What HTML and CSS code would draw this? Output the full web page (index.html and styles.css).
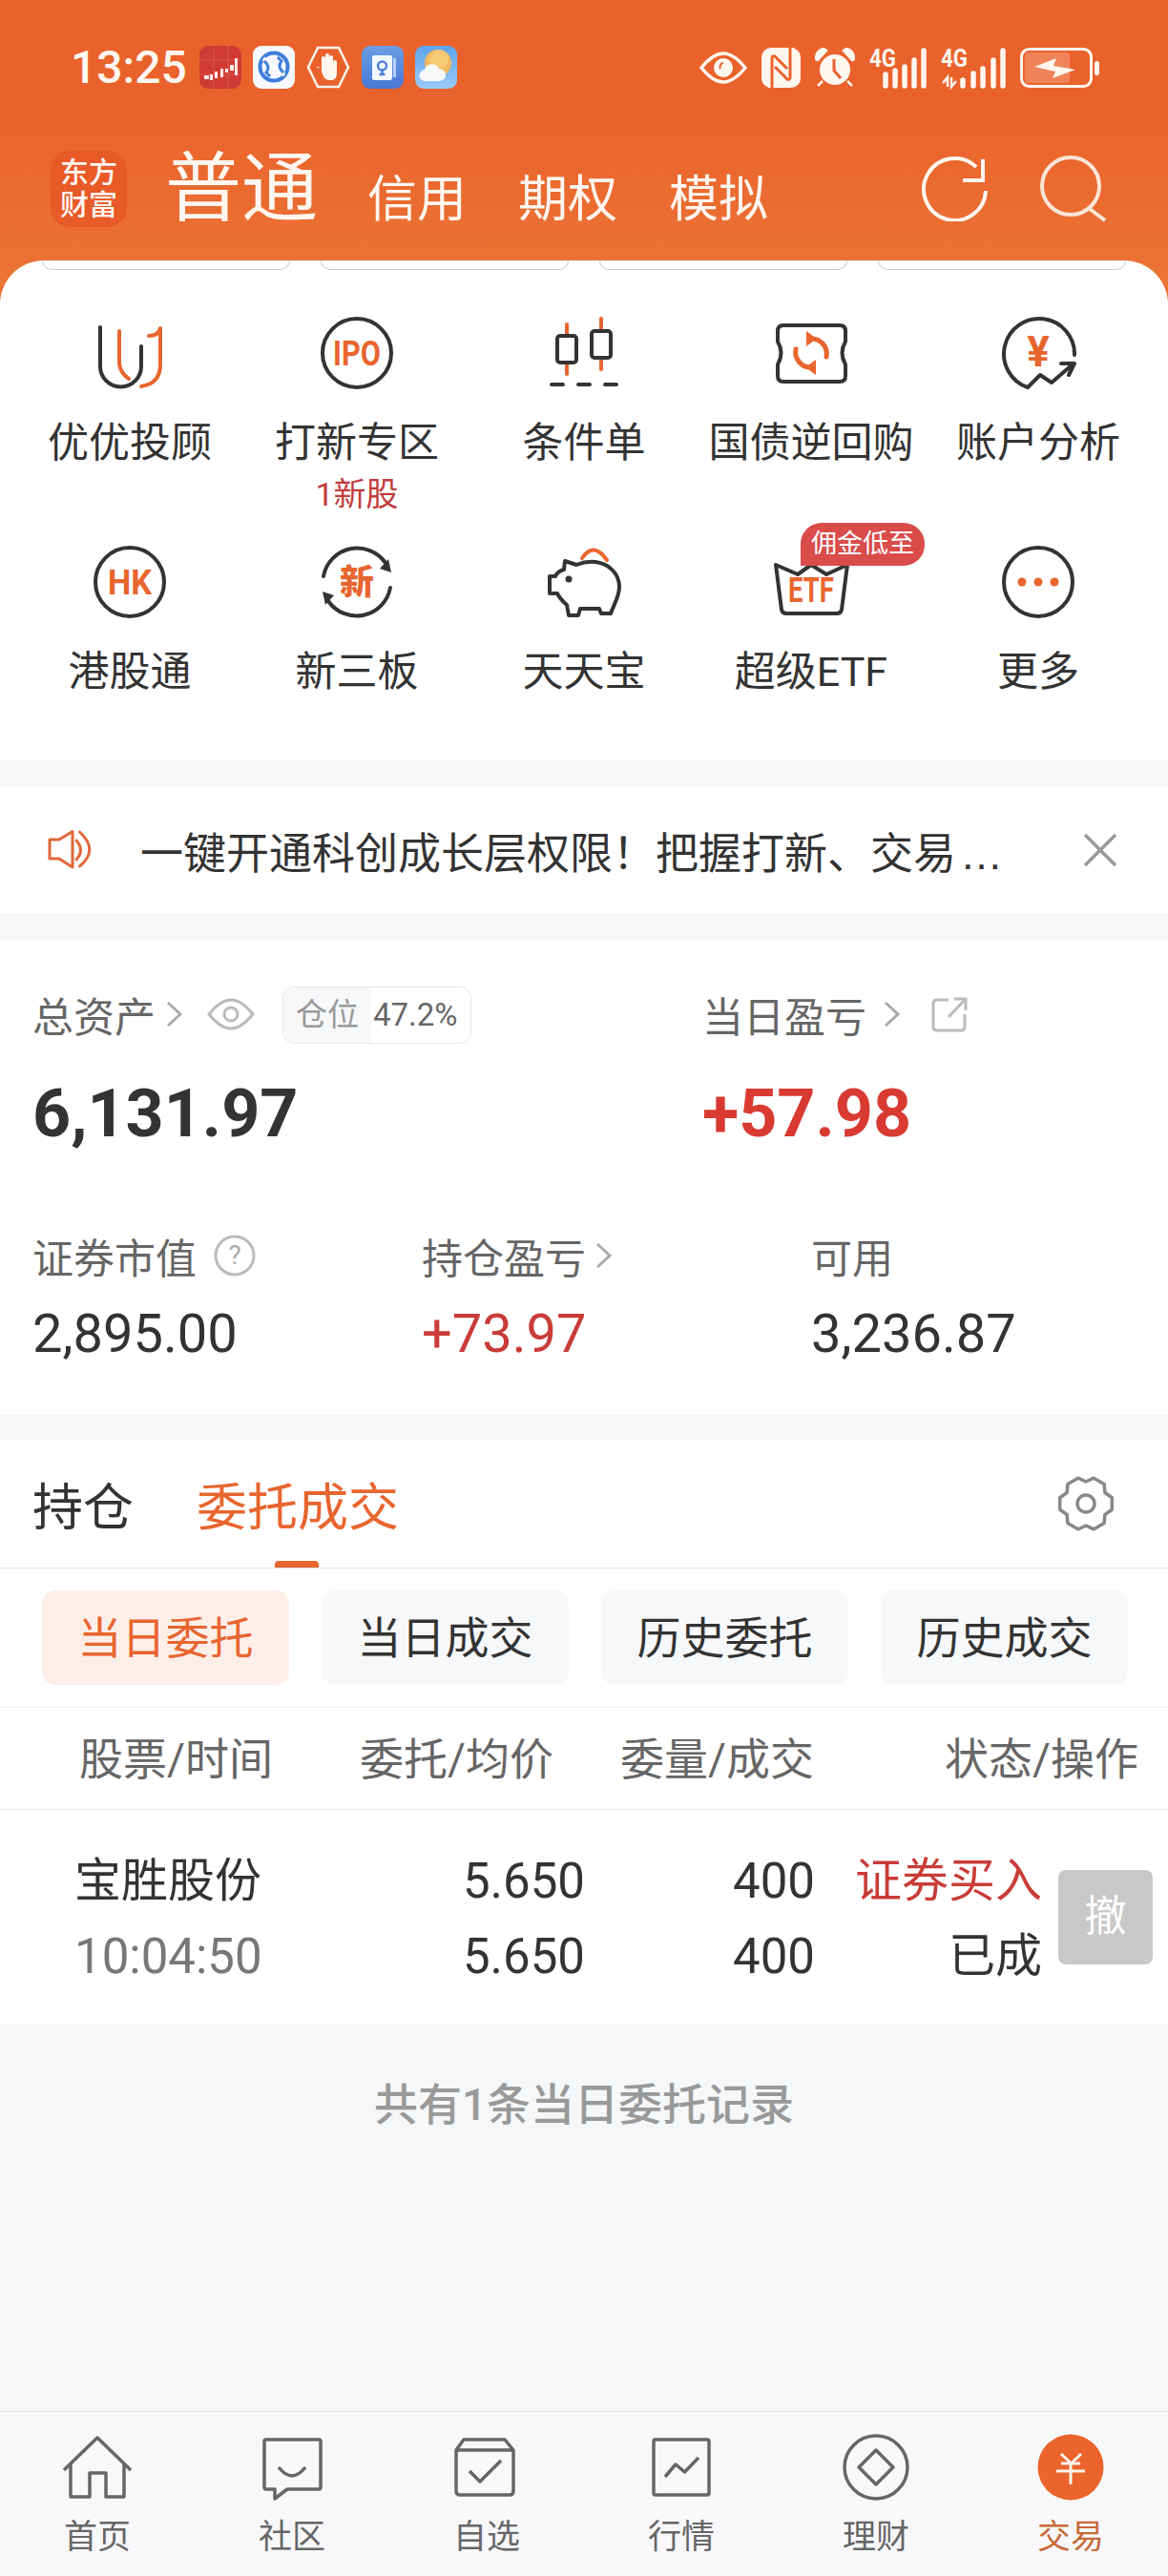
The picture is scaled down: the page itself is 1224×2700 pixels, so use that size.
FILE: index.html
```html
<!DOCTYPE html>
<html lang="zh-CN">
  <head>
    <meta charset="UTF-8" />
    <title>交易</title>
    <link rel="stylesheet" href="styles.css">
  </head>
  <body>
    <div class="page">
      <header class="top">
        <div class="statusbar">
          <span class="clock">13:25</span>
          <div class="notify-icons">
            <svg class="app" viewBox="0 0 44 45"><rect width="44" height="45" rx="9" fill="#cf3b34"/><path d="M0 15H44M0 30H44M15 0V45M30 0V45" stroke="#d9564d" stroke-width="1"/><path d="M5 31h5v4H5zM11 30h3v6h-3zM16 27h3v7h-3zM22 24h3v9h-3zM27 24h3v4h-3zM32 20h4v6h-4zM37 13h3v18h-3z" fill="#ffe9e2"/></svg>
            <svg class="app" viewBox="0 0 44 45"><rect width="44" height="45" rx="9" fill="#f6f9fe"/><circle cx="22" cy="22" r="14.5" fill="none" stroke="#3f7fdc" stroke-width="4"/><path d="M11 13q9 9 4 14M33 31q-9-9-4-14M15 22q7 1 7 0t7 0" fill="none" stroke="#fff" stroke-width="4"/><path d="M12 16q7 6 2 12l4 4M32 28q-7-6-2-12l-4-4" fill="none" stroke="#3f7fdc" stroke-width="3"/></svg>
            <svg class="app hex" viewBox="0 0 46 45"><path d="M12 2H34L44 22.500 34 43H12L2 22.500Z" fill="none" stroke="#fff2ea" stroke-width="2.500"/><path d="M14 23l4 9q2 4 6 4h2q6 0 6-7V17q0-2-2-2t-2 2v6V12q0-2-2-2t-2 2v10V10q0-2-2-2t-2 2v12V13q0-2-2-2t-2 2v14l-3-5q-2-1-2 1z" fill="#fff6f0"/></svg>
            <svg class="app" viewBox="0 0 44 45"><defs><linearGradient id="noteBg" x1="0" y1="0" x2="0" y2="1"><stop offset="0" stop-color="#6a9fe6"/><stop offset="1" stop-color="#4877d4"/></linearGradient></defs><rect width="44" height="45" rx="9" fill="url(#noteBg)"/><rect x="11" y="10" width="21" height="26" rx="2" fill="#f4f8ff"/><rect x="33" y="13" width="3" height="20" fill="#b9d0f4"/><circle cx="21.500" cy="21" r="4.500" fill="none" stroke="#4f80d8" stroke-width="2.500"/><path d="M21.500 24v5M18.500 30h6" stroke="#4f80d8" stroke-width="2.500"/></svg>
            <svg class="app" viewBox="0 0 44 45"><defs><linearGradient id="skyBg" x1="0" y1="0" x2="0" y2="1"><stop offset="0" stop-color="#5da5ee"/><stop offset="1" stop-color="#9acbf7"/></linearGradient></defs><rect width="44" height="45" rx="9" fill="url(#skyBg)"/><circle cx="24" cy="18" r="14" fill="#f2b95c"/><circle cx="25" cy="14" r="10" fill="#f8d489" opacity=".6"/><path d="M11 37a6 6 0 0 1-1-12 8 8 0 0 1 15-1 6.500 6.500 0 0 1 1 13z" fill="#f5f8f6"/></svg>
          </div>
          <div class="system-icons">
            <svg class="sys-eye" viewBox="0 0 50 34"><path d="M2 17Q14 2 25 2T48 17Q36 32 25 32T2 17Z" fill="none" stroke="#fff6f0" stroke-width="3.500"/><circle cx="25" cy="17" r="10" fill="#fff6f0"/><path d="M25 12a4 4 0 0 0-3 6" stroke="#ea622b" stroke-width="2" fill="none"/></svg>
            <svg class="sys-nfc" viewBox="0 0 41 42"><rect width="41" height="42" rx="10" fill="#fff6f0"/><path d="M11 42V11q0-3 3-2l13 13M30 0v31q0 3-3 2L14 20" fill="none" stroke="#ea622b" stroke-width="3"/><path d="M8 42V8M33 0v34" stroke="#fff6f0" stroke-width="2"/></svg>
            <svg class="sys-alarm" viewBox="0 0 42 42"><circle cx="21" cy="23" r="16" fill="#fff6f0"/><path d="M1 12Q1 3 9 1L12 3 3 13ZM41 12Q41 3 33 1L30 3 39 13ZM8 35l-5 5M34 35l5 5" fill="#fff6f0" stroke="#fff6f0" stroke-width="2.500"/><path d="M20 12V24L27 32" fill="none" stroke="#ea622b" stroke-width="3"/></svg>
            <svg class="sys-signal" viewBox="0 0 60 42"><text class="net" x="0" y="20" textLength="28" lengthAdjust="spacingAndGlyphs">4G</text><path d="M17 28V40M27 24V40M37 20V40M47 13V40M57 3V40" stroke="#fff6f0" stroke-width="5.500" stroke-linecap="round"/></svg>
            <svg class="sys-signal2" viewBox="0 0 68 42"><text class="net" x="0" y="20" textLength="28" lengthAdjust="spacingAndGlyphs">4G</text><path d="M2 37l5-6v10M11 31v10l5-6" fill="none" stroke="#fff6f0" stroke-width="2.500"/><path d="M23 34V40M34 27V40M44 22V40M55 13V40M65 3V40" stroke="#fff6f0" stroke-width="5.500" stroke-linecap="round"/></svg>
            <svg class="sys-batt" viewBox="0 0 83 42"><rect x="1.500" y="1.500" width="73" height="39" rx="8" fill="none" stroke="#fff6f0" stroke-width="3"/><rect x="5" y="5" width="47" height="32" rx="4" fill="#f08458"/><rect x="78" y="14" width="5" height="15" rx="2.500" fill="#fff6f0"/><path d="M15 20L38 11 35 19 58 23 34 32 37 25Z" fill="#fff6f0"/></svg>
          </div>
        </div>
        <div class="titlebar">
          <div class="logo"><span>东方</span><span>财富</span></div>
          <span class="acct-current">普通</span>
          <nav class="acct-tabs">
            <span>信用</span>
            <span>期权</span>
            <span>模拟</span>
          </nav>
          <div class="title-actions">
            <svg class="ico-refresh" viewBox="0 0 70 68"><path d="M68 36A32.500 32.500 0 1 1 58 11" fill="none" stroke="#fff6f0" stroke-width="4"/><path d="M65 3V25H44" fill="none" stroke="#fff6f0" stroke-width="4"/></svg>
            <svg class="ico-search" viewBox="0 0 70 70"><circle cx="32" cy="32" r="30" fill="none" stroke="#fde5d8" stroke-width="4"/><path d="M52 56L68 68" stroke="#fde5d8" stroke-width="4"/></svg>
          </div>
        </div>
      </header>

      <section class="entry-card">
        <div class="stubs"><i></i><i></i><i></i><i></i></div>
        <div class="entries">
          <div class="entry">
            <svg class="entry-ico" viewBox="0 0 80 80"><path d="M9 13V54A21.500 21.500 0 0 0 52 54V33" class="ln"/><path d="M29 17V50Q29 60 39 67M60 22Q70 22 72 14V52Q72 72 52 75" class="ln-o"/></svg>
            <span class="entry-name">优优投顾</span>
          </div>
          <div class="entry">
            <svg class="entry-ico" viewBox="0 0 80 80"><circle cx="40" cy="40" r="36" class="ln"/><text class="ico-txt" x="40" y="53" font-size="36" textLength="50" lengthAdjust="spacingAndGlyphs" text-anchor="middle">IPO</text></svg>
            <span class="entry-name">打新专区</span>
            <span class="entry-sub">1新股</span>
          </div>
          <div class="entry">
            <svg class="entry-ico" viewBox="0 0 80 80"><path d="M22 10V62M58 4V57" class="ln-o"/><rect x="12" y="22" width="20" height="28" rx="3" class="ln fill-w"/><rect x="48" y="17" width="20" height="28" rx="3" class="ln fill-w"/><path d="M6 73H18M34 73H46M62 73H74" class="ln"/></svg>
            <span class="entry-name">条件单</span>
          </div>
          <div class="entry">
            <svg class="entry-ico" viewBox="0 0 80 80"><path d="M11 11H70Q76 11 76 17V28Q69 40 76 52V64Q76 70 70 70H11Q5 70 5 64V52Q12 40 5 28V17Q5 11 11 11Z" class="ln"/><path d="M56 44A16 16 0 0 0 39 25M24 36A16 16 0 0 0 41 55" class="ln-o ln-thick"/><path d="M35 17L46 25 35 33ZM45 47L34 55 45 63Z" fill="#e8652f"/></svg>
            <span class="entry-name">国债逆回购</span>
          </div>
          <div class="entry">
            <svg class="entry-ico" viewBox="0 0 80 80"><path d="M78 42A37 37 0 1 0 29 76L42 63 54 71 76 52M64 51H78L72 63" class="ln"/><text class="ico-txt" x="40" y="54" font-size="44" text-anchor="middle">¥</text></svg>
            <span class="entry-name">账户分析</span>
          </div>
          <div class="entry">
            <svg class="entry-ico" viewBox="0 0 80 80"><circle cx="40" cy="40" r="36" class="ln"/><text class="ico-txt" x="40" y="53" font-size="36" textLength="46" lengthAdjust="spacingAndGlyphs" text-anchor="middle">HK</text></svg>
            <span class="entry-name">港股通</span>
          </div>
          <div class="entry">
            <svg class="entry-ico" viewBox="0 0 80 80"><path d="M5 34A36 36 0 0 1 70 20M75 46A36 36 0 0 1 10 60" class="ln"/><path d="M76 30L64 26 73 16ZM4 50L16 54 7 64Z" fill="#333"/><text class="ico-txt ico-cjk" x="40" y="53" font-size="36" text-anchor="middle">新</text></svg>
            <span class="entry-name">新三板</span>
          </div>
          <div class="entry">
            <svg class="entry-ico" viewBox="0 0 80 80"><path d="M38 15Q50-3 64 17" class="ln-o"/><path d="M20 18L32 22Q42 18 52 19C68 21 77 33 77 45 77 55 72 62 68 73H58L56 68H36L34 75H24L22 64Q15 58 12 52H4V34H10Q12 29 19 27Z" class="ln"/><circle cx="24" cy="37" r="3.500" fill="#333"/></svg>
            <span class="entry-name">天天宝</span>
          </div>
          <div class="entry">
            <svg class="entry-ico" viewBox="0 0 80 80"><path d="M3 22L26 32 40 22 56 32 78 22 72 69Q71 73 67 73H14Q10 73 9 69Z" class="ln"/><text class="ico-txt" x="40" y="61" font-size="36" textLength="48" lengthAdjust="spacingAndGlyphs" text-anchor="middle">ETF</text></svg>
            <span class="entry-name">超级ETF</span>
            <span class="entry-badge">佣金低至</span>
          </div>
          <div class="entry">
            <svg class="entry-ico" viewBox="0 0 80 80"><circle cx="40" cy="40" r="36" class="ln"/><circle cx="23" cy="40" r="4.500" fill="#e8652f"/><circle cx="40" cy="40" r="4.500" fill="#e8652f"/><circle cx="57" cy="40" r="4.500" fill="#e8652f"/></svg>
            <span class="entry-name">更多</span>
          </div>
        </div>
      </section>

      <section class="notice">
        <svg class="notice-ico" viewBox="0 0 48 44"><path d="M2 11H12L26 2.500V40L12 31H2Z" fill="none" stroke="#e0683a" stroke-width="3" stroke-linejoin="round"/><path d="M30 12Q39 22 30 32M33.500 3Q54 22 33.500 39" fill="none" stroke="#e0683a" stroke-width="3" stroke-linecap="round"/></svg>
        <span class="notice-text">一键开通科创成长层权限！把握打新、交易<span class="notice-dots">…</span></span>
        <svg class="notice-close" viewBox="0 0 38 38"><path d="M3 3L35 35M35 3L3 35" stroke="#999" stroke-width="3.500"/></svg>
      </section>

      <section class="assets">
        <div class="assets-main">
          <div class="asset-col-lg">
            <div class="asset-label">
              总资产
              <svg class="chev" viewBox="0 0 18 28"><path d="M2 2L15 14 2 26" /></svg>
              <svg class="ico-eye" viewBox="0 0 50 34"><path d="M2 17Q14 2 25 2T48 17Q36 32 25 32T2 17Z"/><circle cx="25" cy="17" r="7"/></svg>
              <span class="position-pill"><em>仓位</em><b>47.2%</b></span>
            </div>
            <div class="asset-big">6,131.97</div>
          </div>
          <div>
            <div class="asset-label">
              当日盈亏
              <svg class="chev chev-far" viewBox="0 0 18 28"><path d="M2 2L15 14 2 26" /></svg>
              <svg class="ico-share" viewBox="0 0 38 38"><path d="M18 3H6Q2 3 2 7V31Q2 35 6 35H31Q35 35 35 31V18"/><path d="M18 21L35 3M24 2H36V14"/></svg>
            </div>
            <div class="asset-big is-up">+57.98</div>
          </div>
        </div>
        <div class="assets-sub">
          <div class="asset-col">
            <div class="asset-label">
              证券市值
              <svg class="ico-help" viewBox="0 0 44 44"><circle cx="22" cy="22" r="20"/><text x="22" y="31" text-anchor="middle">?</text></svg>
            </div>
            <div class="asset-num">2,895.00</div>
          </div>
          <div class="asset-col">
            <div class="asset-label">
              持仓盈亏
              <svg class="chev chev-near" viewBox="0 0 18 28"><path d="M2 2L15 14 2 26" /></svg>
            </div>
            <div class="asset-num is-up">+73.97</div>
          </div>
          <div>
            <div class="asset-label">可用</div>
            <div class="asset-num">3,236.87</div>
          </div>
        </div>
      </section>

      <section class="orders">
        <div class="order-tabs">
          <span>持仓</span>
          <span class="is-active">委托成交</span>
          <svg class="ico-gear" viewBox="0 0 60 60"><path d="M57.300 23.700V36.300L49.900 41.500 49.100 50.500 38.200 56.800 30 53 21.800 56.800 10.900 50.500 10.100 41.500 2.700 36.300V23.700L10.100 18.500 10.900 9.500 21.800 3.200 30 7 38.200 3.200 49.100 9.500 49.900 18.500Z"/><circle cx="30" cy="30" r="9"/></svg>
        </div>
        <div class="order-filters">
          <span class="is-active">当日委托</span>
          <span>当日成交</span>
          <span>历史委托</span>
          <span>历史成交</span>
        </div>
        <div class="order-head">
          <span>股票/时间</span>
          <span>委托/均价</span>
          <span>委量/成交</span>
          <span>状态/操作</span>
        </div>
        <div class="order-row">
          <span class="order-name">宝胜股份</span>
          <span class="num">5.650</span>
          <span class="num">400</span>
          <span class="num order-state order-side">证券买入</span>
          <span class="cancel-btn">撤</span>
          <span class="order-time">10:04:50</span>
          <span class="num">5.650</span>
          <span class="num">400</span>
          <span class="num order-state">已成</span>
        </div>
      </section>

      <div class="orders-foot">共有1条当日委托记录</div>

      <nav class="tabbar">
        <div class="tab">
          <svg viewBox="0 0 72 72"><path d="M1 39L36 5 71 39M8 32V67H28V42H45V67H64V32"/></svg>
          <span>首页</span>
        </div>
        <div class="tab">
          <svg viewBox="0 0 72 72"><path d="M9 7H64Q66 7 66 9V57Q66 59 64 59H31L18 69V59H9Q7 59 7 57V9Q7 7 9 7Z"/><path d="M22 36Q36 54 50 36"/></svg>
          <span>社区</span>
        </div>
        <div class="tab">
          <svg viewBox="0 0 72 72"><path d="M12 7H55L64 18V61Q64 65 60 65H8Q4 65 4 61V18ZM4 18H64"/><path d="M18 40L29 51 51 29"/></svg>
          <span>自选</span>
        </div>
        <div class="tab">
          <svg viewBox="0 0 72 72"><rect x="7" y="7" width="58" height="58" rx="2"/><path d="M19 46L30 33 39.500 41 54 26"/></svg>
          <span>行情</span>
        </div>
        <div class="tab">
          <svg viewBox="0 0 72 72"><circle cx="36" cy="36" r="33"/><path d="M36 18L54 36 36 54 18 36Z"/></svg>
          <span>理财</span>
        </div>
        <div class="tab is-active">
          <svg viewBox="0 0 72 72"><circle class="trade-bg" cx="36" cy="36" r="34.500"/><path class="trade-mark" d="M26 22L36.500 32 47 22M26 32H46M21 40H51M36 32V54"/></svg>
          <span>交易</span>
        </div>
      </nav>
    </div>
  </body>
</html>
```

FILE: styles.css
```css
/* Reset */
* {
  box-sizing: border-box;
}
html,
body {
  margin: 0;
  padding: 0;
}
body {
  font-family: Roboto, "Noto Sans CJK SC", sans-serif;
  color: #333;
}
svg {
  display: block;
  flex: none;
}
.page {
  width: 1224px;
  height: 2700px;
  display: flex;
  flex-direction: column;
  overflow: hidden;
  background: linear-gradient(180deg, #ea622b 0, #ea622b 110px, #eb7636 320px) no-repeat top / 100% 320px, #f6f7f9;
}

/* Status bar */
.top {
  height: 273px;
  padding-top: 48px;
  color: #fff6f0;
}
.statusbar {
  display: flex;
  align-items: center;
  height: 45px;
  padding: 0 72px 0 74px;
}
.clock {
  width: 135px;
  font-size: 48px;
  font-weight: 500;
  line-height: 45px;
  flex: none;
}
.notify-icons {
  display: flex;
  gap: 12px;
}
.app {
  width: 44px;
  height: 45px;
}
.hex {
  width: 46px;
}
.system-icons {
  display: flex;
  align-items: center;
  gap: 15px;
  margin-left: auto;
}
.sys-eye { width: 50px; height: 34px; }
.sys-nfc { width: 41px; height: 42px; }
.sys-alarm { width: 42px; height: 42px; }
.sys-signal { width: 60px; height: 42px; overflow: visible; }
.sys-signal2 { width: 68px; height: 42px; overflow: visible; }
.sys-batt { width: 83px; height: 42px; }
.net {
  font-family: Roboto, sans-serif;
  font-size: 26px;
  font-weight: 700;
  fill: #fff6f0;
}

/* Title bar */
.titlebar {
  display: flex;
  align-items: flex-end;
  height: 80px;
  margin-top: 65px;
  padding-left: 53px;
  padding-right: 64px;
}
.logo {
  width: 80px;
  height: 80px;
  display: flex;
  flex-direction: column;
  align-items: center;
  justify-content: center;
  background: #e85a28;
  border-radius: 20px;
  font-size: 30px;
  font-weight: 500;
  line-height: 34px;
}
.acct-current {
  margin-left: 40px;
  font-size: 80px;
  line-height: 80px;
}
.acct-tabs {
  display: flex;
  gap: 54px;
  margin-left: 52px;
  font-size: 52px;
  line-height: 56px;
}
.title-actions {
  display: flex;
  gap: 55px;
  align-items: center;
  margin-left: auto;
  height: 80px;
}
.ico-refresh { width: 70px; height: 68px; }
.ico-search { width: 70px; height: 70px; }

/* Entry grid */
.entry-card {
  height: 524px;
  background: #fff;
  border-radius: 46px 46px 0 0;
  flex: none;
}
.stubs {
  display: flex;
  justify-content: space-between;
  height: 10px;
  padding: 0 44px;
}
.stubs i {
  width: 260px;
  height: 10px;
  border: 1px solid #ccc;
  border-top: 0;
  border-radius: 0 0 22px 22px;
}
.entries {
  display: grid;
  grid-template-columns: repeat(5, 238px);
  grid-auto-rows: 240px;
  padding: 47px 17px 0;
}
.entry {
  position: relative;
  display: flex;
  flex-direction: column;
  align-items: center;
}
.entry-ico {
  width: 80px;
  height: 80px;
  margin-bottom: 25px;
}
.ln,
.ln-o {
  fill: none;
  stroke: #333;
  stroke-width: 4;
  stroke-linecap: round;
  stroke-linejoin: round;
}
.ln-o {
  stroke: #e8652f;
}
.ln-thick {
  stroke-width: 5;
}
.fill-w {
  fill: #fff;
}
.ico-txt {
  fill: #e8652f;
  font-family: Roboto, sans-serif;
  font-weight: 700;
}
.ico-cjk {
  font-family: "Noto Sans CJK SC", sans-serif;
  font-weight: 900;
}
.entry-name {
  font-size: 43px;
  line-height: 58px;
  white-space: nowrap;
}
.entry-sub {
  font-size: 34px;
  line-height: 50px;
  color: #c23b3b;
}
.entry-badge {
  position: absolute;
  left: 108px;
  top: -22px;
  width: 130px;
  height: 45px;
  background: #d94c4a;
  border-radius: 22px 22px 22px 0;
  color: #fff;
  font-size: 27px;
  line-height: 45px;
  text-align: center;
}

/* Notice */
.notice {
  display: flex;
  align-items: center;
  height: 132px;
  margin-top: 28px;
  padding: 0 52px 0 50px;
  background: #fff;
  flex: none;
}
.notice-ico {
  width: 48px;
  height: 44px;
}
.notice-text {
  margin-left: 49px;
  font-size: 45px;
  white-space: nowrap;
}
.notice-dots {
  margin-left: 4px;
  font-family: "Liberation Sans", sans-serif;
}
.notice-close {
  width: 38px;
  height: 38px;
  margin-left: auto;
}

/* Assets */
.assets {
  height: 498px;
  margin-top: 28px;
  padding: 53px 0 0 34px;
  background: #fff;
  flex: none;
}
.assets-main,
.assets-sub {
  display: flex;
}
.assets-sub {
  margin-top: 84px;
}
.asset-col-lg {
  width: 702px;
}
.asset-col {
  width: 408px;
}
.asset-label {
  display: flex;
  align-items: center;
  height: 50px;
  font-size: 43px;
  color: #666;
}
.chev {
  width: 18px;
  height: 28px;
  margin-left: 11px;
  fill: none;
  stroke: #aaa;
  stroke-width: 3;
}
.chev-far {
  margin-left: 18px;
}
.chev-near {
  margin-left: 10px;
}
.ico-eye {
  width: 50px;
  height: 34px;
  margin-left: 25px;
  fill: none;
  stroke: #bbb;
  stroke-width: 3;
}
.position-pill {
  display: flex;
  align-items: stretch;
  width: 198px;
  height: 60px;
  margin-left: 29px;
  margin-top: 2px;
  border: 1px solid #e6e6e6;
  border-radius: 12px;
  overflow: hidden;
  font-size: 33px;
  line-height: 58px;
}
.position-pill em {
  width: 92px;
  background: #f7f8fa;
  color: #999;
  font-style: normal;
  text-align: center;
}
.position-pill b {
  margin-left: 2px;
  font-weight: 400;
  color: #666;
}
.ico-share {
  width: 38px;
  height: 38px;
  margin-left: 32px;
  margin-top: 2px;
  fill: none;
  stroke: #bbb;
  stroke-width: 3;
}
.ico-help {
  width: 44px;
  height: 44px;
  margin-left: 18px;
  fill: none;
  stroke: #bbb;
  stroke-width: 3;
}
.ico-help text {
  fill: #aaa;
  stroke: none;
  font-size: 28px;
}
.asset-big {
  margin-top: 39px;
  font-size: 70px;
  font-weight: 700;
  line-height: 80px;
}
.asset-num {
  margin-top: 22px;
  font-size: 56px;
  line-height: 70px;
}
.is-up {
  color: #d93a32;
}
.asset-num.is-up {
  color: #c93c38;
}

/* Orders */
.orders {
  margin-top: 27px;
  background: #fff;
  flex: none;
}
.order-tabs {
  position: relative;
  display: flex;
  align-items: center;
  gap: 66px;
  height: 134px;
  padding: 0 56px 2px 34px;
  border-bottom: 1px solid #e0e0e0;
  font-size: 53px;
}
.order-tabs .is-active {
  color: #e8652f;
}
.order-tabs .is-active::after {
  content: "";
  position: absolute;
  left: 288px;
  bottom: 0;
  width: 46px;
  height: 7px;
  border-radius: 4px 4px 0 0;
  background: #e8652f;
}
.ico-gear {
  width: 60px;
  height: 60px;
  margin-left: auto;
  fill: none;
  stroke: #888;
  stroke-width: 3.500;
  stroke-linejoin: round;
}
.order-filters {
  display: grid;
  grid-template-columns: repeat(4, 259px);
  gap: 34px;
  height: 146px;
  padding: 23px 0 0 44px;
  border-bottom: 1px solid #f0f0f0;
}
.order-filters span {
  height: 99px;
  background: #f7f8fa;
  border-radius: 14px;
  font-size: 46px;
  line-height: 100px;
  text-align: center;
}
.order-filters .is-active {
  background: #fdeee8;
  color: #e8652f;
}
.order-head {
  display: grid;
  grid-template-columns: 294px 273px 340px 1fr;
  height: 107px;
  padding-left: 83px;
  border-bottom: 1px solid #e8e8e8;
  color: #666;
  font-size: 46px;
  line-height: 108px;
  white-space: nowrap;
}
.order-row {
  display: grid;
  grid-template-columns: 244px 291px 241px 238px 1fr;
  grid-template-rows: 79px 79px;
  height: 225px;
  padding: 35px 0 0 78px;
  font-size: 51px;
  line-height: 79px;
}
.order-name,
.order-state {
  font-size: 49px;
}
.order-row .num {
  text-align: right;
}
.order-side {
  color: #c93c38;
}
.order-row .cancel-btn {
  grid-column: 5;
  grid-row: 1 / 3;
  align-self: center;
  justify-self: start;
  width: 99px;
  height: 99px;
  margin-left: 17px;
  margin-bottom: 3px;
  background: #c8c8c8;
  border-radius: 8px;
  color: #fff;
  font-size: 44px;
  line-height: 99px;
  text-align: center;
}
.order-time {
  color: #777;
  white-space: nowrap;
}
.orders-foot {
  flex: 1;
  padding-top: 54px;
  color: #999;
  font-size: 46px;
  font-weight: 500;
  line-height: 60px;
  text-align: center;
}

/* Tab bar */
.tabbar {
  display: grid;
  grid-template-columns: repeat(6, 204px);
  height: 173px;
  padding-top: 22px;
  background: #f8f8fb;
  border-top: 1px solid #e4e4e4;
  flex: none;
}
.tab {
  display: flex;
  flex-direction: column;
  align-items: center;
  color: #666;
  font-size: 35px;
  line-height: 50px;
}
.tab svg {
  width: 72px;
  height: 72px;
  margin-bottom: 13px;
  fill: none;
  stroke: #666;
  stroke-width: 3.500;
  stroke-linejoin: round;
}
.tab.is-active {
  color: #c86a37;
}
.tab .trade-bg {
  fill: #ea642c;
  stroke: none;
}
.tab .trade-mark {
  stroke: #fff3ec;
  stroke-width: 3;
}
```
